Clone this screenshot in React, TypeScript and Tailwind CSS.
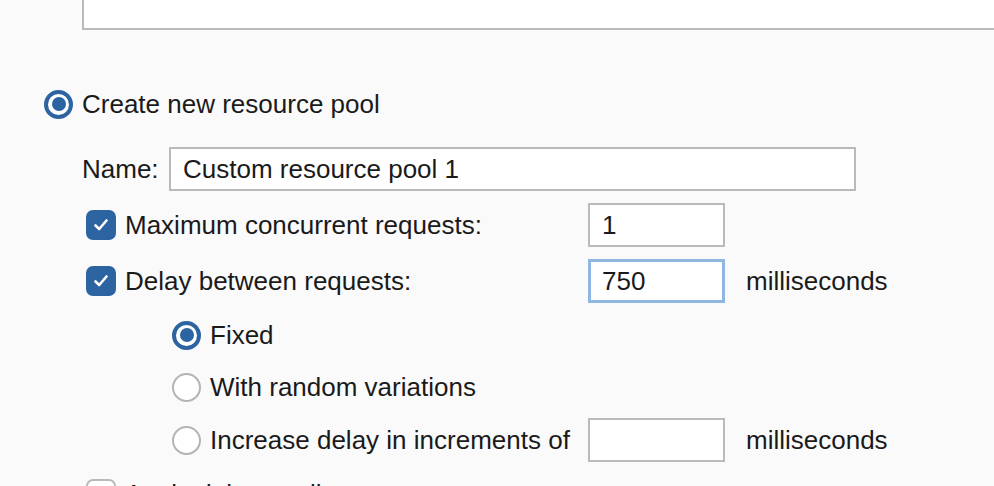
import React from 'react';

const font = { fontFamily: '"Liberation Sans", Arial, sans-serif' };

const Radio: React.FC<{ checked?: boolean }> = ({ checked }) =>
  checked ? (
    <div className="w-[29px] h-[29px] rounded-full border-[4px] border-[#2b64a1] bg-white flex items-center justify-center shrink-0">
      <div className="w-[14px] h-[14px] rounded-full bg-[#2b64a1]" />
    </div>
  ) : (
    <div className="w-[29px] h-[29px] rounded-full border-2 border-[#b4b4b4] bg-white shrink-0" />
  );

const Checkbox: React.FC<{ checked?: boolean }> = ({ checked }) =>
  checked ? (
    <div className="w-[30px] h-[30px] rounded-[7px] bg-[#2b64a1] flex items-center justify-center shrink-0">
      <svg width="18" height="18" viewBox="0 0 18 18" fill="none">
        <path d="M3.5 9.5 L7.2 13 L14.5 4.5" stroke="white" strokeWidth="2.6" strokeLinecap="round" strokeLinejoin="round" />
      </svg>
    </div>
  ) : (
    <div className="w-[30px] h-[30px] rounded-[7px] border-2 border-[#b9b9b9] bg-white shrink-0" />
  );

const Field: React.FC<{ value?: string; focused?: boolean; className?: string }> = ({ value, focused, className }) => (
  <div
    className={
      'h-[44px] bg-white flex items-center text-[26px] text-[#1a1a1a] ' +
      (focused ? 'border-[3px] border-[#8fb7e2] pl-[11px] ' : 'border-2 border-[#bdb8ba] pl-[12px] ') +
      (className || '')
    }
  >
    {value}
  </div>
);

export default function App() {
  return (
    <div className="w-[994px] h-[486px] overflow-hidden bg-[#fafafa] text-[#1a1a1a] text-[26px] leading-none" style={font}>
      <div className="flex flex-col">
        {/* bottom of the previous text area, scrolled off the top */}
        <div className="ml-[82px] h-[30px] w-[940px] bg-white border-l-2 border-b-2 border-[#bdb8ba]" />

        <div className="mt-[59px] h-[30px] ml-[44px] flex items-center gap-[9px]">
          <Radio checked />
          <span>Create new resource pool</span>
        </div>

        <div className="mt-[28px] ml-[82px] flex items-center">
          <span className="w-[87px]">Name:</span>
          <Field value="Custom resource pool 1" className="w-[687px]" />
        </div>

        <div className="mt-[12px] ml-[86px] flex items-center">
          <div className="flex items-center gap-[9px] w-[502px]">
            <Checkbox checked />
            <span>Maximum concurrent requests:</span>
          </div>
          <Field value="1" className="w-[137px]" />
        </div>

        <div className="mt-[12px] ml-[86px] flex items-center">
          <div className="flex items-center gap-[9px] w-[502px]">
            <Checkbox checked />
            <span>Delay between requests:</span>
          </div>
          <Field value="750" focused className="w-[137px]" />
          <span className="ml-[21px]">milliseconds</span>
        </div>

        <div className="mt-[17px] ml-[172px] h-[30px] flex items-center gap-[9px]">
          <Radio checked />
          <span>Fixed</span>
        </div>

        <div className="mt-[22px] ml-[172px] h-[30px] flex items-center gap-[9px]">
          <Radio />
          <span>With random variations</span>
        </div>

        <div className="mt-[16px] ml-[172px] flex items-center">
          <div className="flex items-center gap-[9px] w-[416px]">
            <Radio />
            <span>Increase delay in increments of</span>
          </div>
          <Field className="w-[137px]" />
          <span className="ml-[21px]">milliseconds</span>
        </div>

        <div className="mt-[17px] ml-[86px] flex items-center gap-[9px]">
          <Checkbox />
          <span>Apply delay to all requests</span>
        </div>
      </div>
    </div>
  );
}
